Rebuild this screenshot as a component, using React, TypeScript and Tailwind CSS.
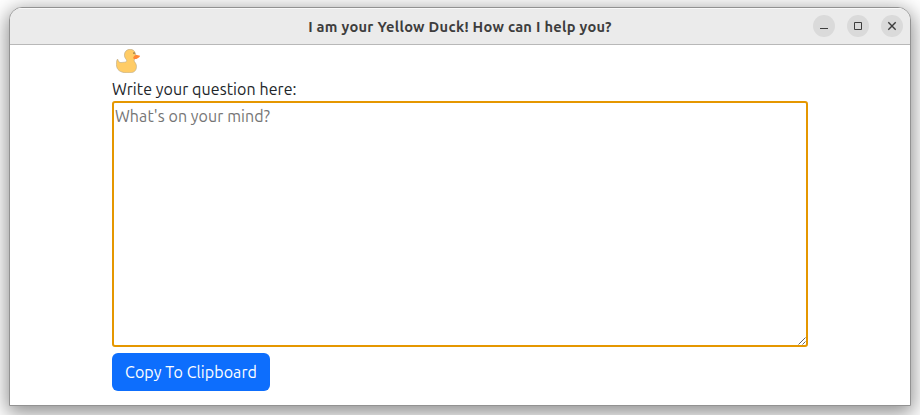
import type { ReactNode } from "react";

function WindowButton({ label, children }: { label: string; children: ReactNode }) {
  return (
    <button aria-label={label} className="flex size-[22px] items-center justify-center rounded-full bg-[#dadada]">
      <svg width="22" height="22" viewBox="0 0 22 22" fill="none" stroke="#3d3d3d">
        {children}
      </svg>
    </button>
  );
}

function Duck() {
  return (
    <svg className="ml-1 block" width="24" height="24" viewBox="0 0 24 24" role="img" aria-label="Yellow duck">
      <path
        d="M8.4 6.1C8.4 2.5 11 .3 14 .3c2.8 0 4.8 1.5 5.3 4.1.4 2.5.2 4.3-.8 6.2-.7 1.3-.2 1.8.8 3.2 1.9 2.8 1.5 6.8-1 8.8-1.3 1-3 1.2-7.3 1.2C4.5 23.8.4 21 .4 15.5c0-2.5.3-4.6 1.2-5.4.4.9.8 2.1 1.6 3 1 .8 2.4.3 4.3.2 1.4-.1 2.6-.3 3-1 .5-.8-.1-1.6-.7-2.4-.9-1.1-1.4-2.2-1.4-3.8Z"
        fill="#ffcc66"
        stroke="#b9a98a"
        strokeWidth=".6"
      />
      <path d="M18.2 6.9 20 5.8l4 1c0 1.5-1.8 2.2-3.6 3.1-1.2.3-2.3.2-3-.4-.4-.8-.1-1.8.8-2.6Z" fill="#ff8736" />
      <path d="M17 4.4c.7-.6 1.5-.5 2.2.1" fill="none" stroke="#6f5a38" strokeWidth="1" />
    </svg>
  );
}

export default function App() {
  return (
    <div className="h-[415px] w-[920px] overflow-hidden bg-white px-[9px] pt-[7px] font-['Ubuntu','Noto_Sans',sans-serif]">
      <main className="h-[399px] w-[902px] overflow-hidden rounded-t-[13px] border border-[#929292] bg-white shadow-[0_5px_20px_2px_rgba(0,0,0,0.45)]">
        <header className="flex h-[37px] items-center border-b border-[#b8b8b8] bg-[#ebebeb] shadow-[inset_0_1px_0_#f9f9f9]">
          <div className="w-[120px]" />
          <h1 className="flex-1 pt-px text-center text-[14.67px] leading-5 font-bold tracking-[0.28px] whitespace-nowrap text-[#3d3d3d]">
            I am your Yellow Duck! How can I help you?
          </h1>
          <div className="flex w-[120px] justify-end gap-3 pr-[7px]">
            <WindowButton label="Minimize">
              <path d="M7 13.5h8" />
            </WindowButton>
            <WindowButton label="Maximize">
              <path d="M7.5 7.5h7v7h-7z" />
            </WindowButton>
            <WindowButton label="Close">
              <path d="m7.3 7.3 7.4 7.4m0-7.4-7.4 7.4" strokeWidth="1.4" />
            </WindowButton>
          </div>
        </header>
        <section className="mx-auto flex w-[696px] flex-col items-start pt-1">
          <Duck />
          <label htmlFor="question" className="mt-1 h-6 text-[16px] leading-6 tracking-[0.08px] whitespace-nowrap text-[#212529]">
            Write your question here:
          </label>
          <div className="relative w-full">
            <textarea
              id="question"
              placeholder="What's on your mind?"
              className="block h-[246px] w-full resize-none rounded-[3px] border-2 border-[#e59700] bg-white px-px pt-px text-[16px] leading-6 tracking-[0.08px] outline-none placeholder:text-[#757575]"
            />
            <svg
              className="pointer-events-none absolute right-0.5 bottom-0.5"
              width="8"
              height="8"
              viewBox="0 0 8 8"
              fill="none"
              stroke="#555"
              strokeWidth=".9"
            >
              <path d="M.5 7.5l7-7M4.5 7.5l3-3" />
            </svg>
          </div>
          <button className="mt-1.5 h-[38px] w-[158px] rounded-md bg-[#0d6efd] text-[16px] leading-6 tracking-[0.08px] whitespace-nowrap text-white">
            Copy To Clipboard
          </button>
        </section>
      </main>
    </div>
  );
}
